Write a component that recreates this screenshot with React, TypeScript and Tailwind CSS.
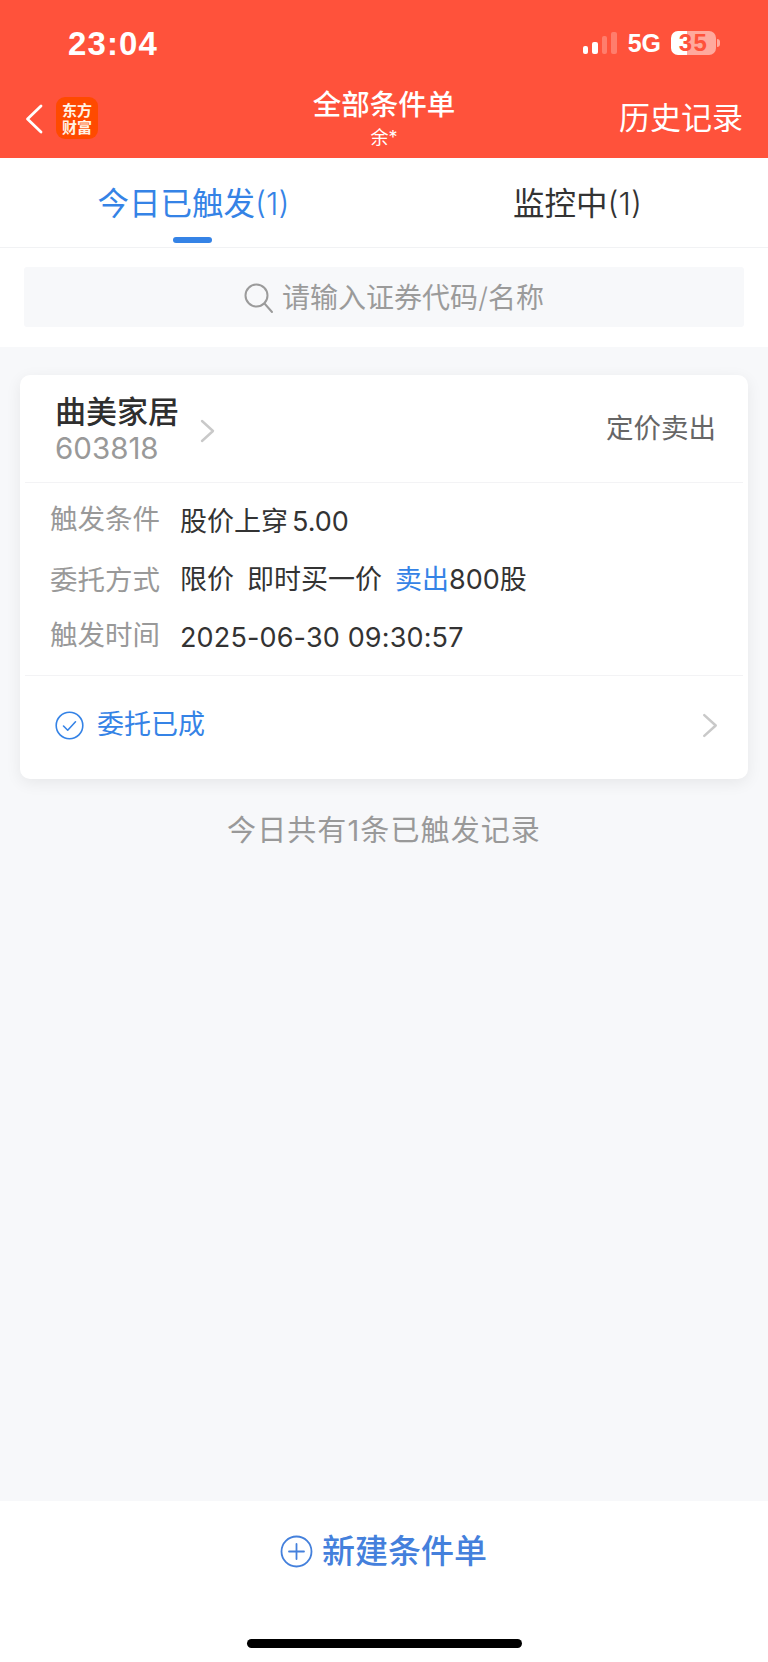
const font = "font-['Inter','Noto_Sans_CJK_SC',sans-serif]";

const rows = [
  { label: "触发条件", rowClass: "", valueClass: "mt-[3px]", value: <>股价上穿<span className="ml-[4px]">5.00</span></> },
  {
    label: "委托方式",
    rowClass: "mt-[23px]",
    valueClass: "",
    value: (
      <>
        限价<span className="ml-[13px]">即时买一价</span>
        <span className="ml-[13px] text-[#3583e6]">卖出</span>800股
      </>
    ),
  },
  { label: "触发时间", rowClass: "mt-[17px]", valueClass: "mt-[3px] tracking-[0.15px]", value: <>2025-06-30 09:30:57</> },
];

// thin grey arrow used on the card rows
function Arrow({ className }: { className: string }) {
  return (
    <svg className={className} viewBox="0 0 15 24" fill="none" stroke="#c9c9c9" strokeWidth="2.4" strokeLinecap="round" strokeLinejoin="round">
      <path d="M2 2l11 10L2 22" />
    </svg>
  );
}

function StatusBar() {
  return (
    <div className="flex h-[86px] items-center justify-between pl-[68px] pr-[48px] text-white">
      <span className="text-[33px] leading-none font-bold font-['Liberation_Sans',sans-serif] tracking-[1.1px]">23:04</span>
      <div className="flex items-center">
        <div className="flex items-end gap-[4px]">
          <div className="h-[8px] w-[5.5px] rounded-[2px] bg-white" />
          <div className="h-[12px] w-[5.5px] rounded-[2px] bg-white" />
          <div className="h-[18px] w-[5.5px] rounded-[2px] bg-white/25" />
          <div className="h-[22px] w-[5.5px] rounded-[2px] bg-white/25" />
        </div>
        <span className="ml-[11px] text-[25px] leading-none font-bold font-['Liberation_Sans',sans-serif]">5G</span>
        <div className="ml-[10px] flex items-center">
          <div className="h-[24px] w-[45px] rounded-[7px] bg-[linear-gradient(90deg,#ffffff_16px,#ffa99d_16px)] text-center text-[24px] leading-[24px] font-bold font-['Liberation_Sans',sans-serif] tracking-[1.5px] text-[#ff523b]">
            35
          </div>
          <div className="ml-[1px] h-[8px] w-[3px] rounded-r-full bg-[#ffa99d]" />
        </div>
      </div>
    </div>
  );
}

function NavBar() {
  return (
    <div className="grid h-[72px] grid-cols-[1fr_auto_1fr] text-white">
      <div className="flex items-start pt-[11px] pl-[25px]">
        <svg className="mt-[7px] h-[30px] w-[18px]" viewBox="0 0 18 30" fill="none" stroke="currentColor" strokeWidth="2.8" strokeLinecap="round" strokeLinejoin="round">
          <path d="M16 2L2.5 15 16 28" />
        </svg>
        <div className="ml-[13px] flex h-[42px] w-[42px] flex-col items-center justify-center rounded-[9px] bg-[#ff4a00] text-[15px] leading-[17px] font-bold font-['Noto_Sans_CJK_SC',sans-serif] text-[#fff3e6]">
          <span>东方</span>
          <span>财富</span>
        </div>
      </div>
      <div className="flex flex-col items-center">
        <span className="mt-[1px] text-[28.5px] leading-[36px] font-medium">全部条件单</span>
        <span className="mt-[4px] text-[18px] leading-[22px]">余*</span>
      </div>
      <div className="pt-[14px] pr-[25px] text-right text-[31px] leading-[36px]">历史记录</div>
    </div>
  );
}

function Tabs() {
  return (
    <div className="grid h-[90px] grid-cols-2 border-b border-[#f1f2f4] bg-white">
      <div className="relative flex justify-center pt-[22px] pl-[3px] text-[31.5px] leading-[48px] text-[#3583e6]">
        今日已触发<span className="font-light">(1)</span>
        <div className="absolute top-[79px] left-[173px] h-[6px] w-[39px] rounded-full bg-[#3583e6]" />
      </div>
      <div className="flex justify-center pt-[22px] pl-[3px] text-[31.5px] leading-[48px] text-[#333333]">
        监控中<span className="font-light">(1)</span>
      </div>
    </div>
  );
}

function SearchBox() {
  return (
    <div className="bg-white px-[24px] pt-[19px] pb-[20px]">
      <div className="flex h-[60px] items-center justify-center gap-[8px] rounded-[3px] bg-[#f7f8fa] pt-[2px] pl-[19px] text-[28px] text-[#9b9b9b]">
        <svg className="h-[31px] w-[31px]" viewBox="0 0 31 31" fill="none" stroke="currentColor" strokeWidth="2" strokeLinecap="round">
          <circle cx="13.5" cy="12.5" r="11" />
          <path d="M21.5 20.5l7.5 8.5" />
        </svg>
        <span>请输入证券代码<span className="font-light">/</span>名称</span>
      </div>
    </div>
  );
}

function OrderCard() {
  return (
    <div className="mx-[20px] mt-[28px] rounded-[10px] bg-white shadow-[0_4px_16px_rgba(0,0,0,0.07)]">
      <div className="mx-[5px] flex h-[108px] items-center justify-between border-b border-[#f3f3f5] pr-[27px] pl-[30px]">
        <div className="flex items-center">
          <div className="flex flex-col">
            <span className="text-[31px] leading-[38px] font-medium text-[#2f2f2f]">曲美家居</span>
            <span className="text-[29.5px] leading-[34px] text-[#999999]">603818</span>
          </div>
          <Arrow className="ml-[21px] mt-[4px] h-[24px] w-[15px]" />
        </div>
        <span className="-mt-[2px] text-[27.5px] leading-[38px] text-[#666666]">定价卖出</span>
      </div>
      <div className="mx-[5px] h-[193px] border-b border-[#f3f3f5] pt-[17px] pl-[25px]">
        {rows.map((row) => (
          <div key={row.label} className={`flex h-[38px] items-start ${row.rowClass}`}>
            <span className="w-[130px] shrink-0 text-[27.5px] leading-[38px] text-[#999999]">{row.label}</span>
            <span className={`text-[27px] leading-[38px] text-[#333333] ${row.valueClass}`}>{row.value}</span>
          </div>
        ))}
      </div>
      <div className="flex h-[103px] items-center justify-between pr-[30px] pl-[35px] pb-[5px]">
        <div className="flex items-center gap-[13px]">
          <svg width="29" height="29" viewBox="0 0 29 29" fill="none" stroke="#3583e6" strokeWidth="1.6" strokeLinecap="round" strokeLinejoin="round">
            <circle cx="14.5" cy="14.5" r="13.3" />
            <path d="M8.5 15l4.2 4.2 7.8-8.4" />
          </svg>
          <span className="text-[27px] text-[#3583e6]">委托已成</span>
        </div>
        <Arrow className="h-[25px] w-[16px]" />
      </div>
    </div>
  );
}

export default function App() {
  return (
    <div className={`flex h-[1662px] w-[768px] flex-col overflow-hidden bg-[#f7f8fa] ${font}`}>
      <header className="h-[158px] shrink-0 bg-[#ff523b]">
        <StatusBar />
        <NavBar />
      </header>
      <Tabs />
      <SearchBox />
      <main className="flex-1">
        <OrderCard />
        <p className="mt-[32px] text-center text-[29px] leading-[40px] tracking-[1.1px] text-[#999999]">今日共有1条已触发记录</p>
      </main>
      <footer className="flex h-[161px] shrink-0 flex-col items-center bg-white">
        <div className="mt-[30px] -ml-[1px] flex h-[40px] items-center gap-[9px] text-[#4480dc]">
          <svg width="33" height="33" viewBox="0 0 33 33" fill="none" stroke="currentColor" strokeWidth="1.8" strokeLinecap="round">
            <circle cx="16.5" cy="16.5" r="15" />
            <path d="M16.5 9v15M9 16.5h15" />
          </svg>
          <span className="text-[33px] leading-[40px] font-medium">新建条件单</span>
        </div>
        <div className="mt-[68px] h-[9px] w-[275px] rounded-full bg-black" />
      </footer>
    </div>
  );
}
